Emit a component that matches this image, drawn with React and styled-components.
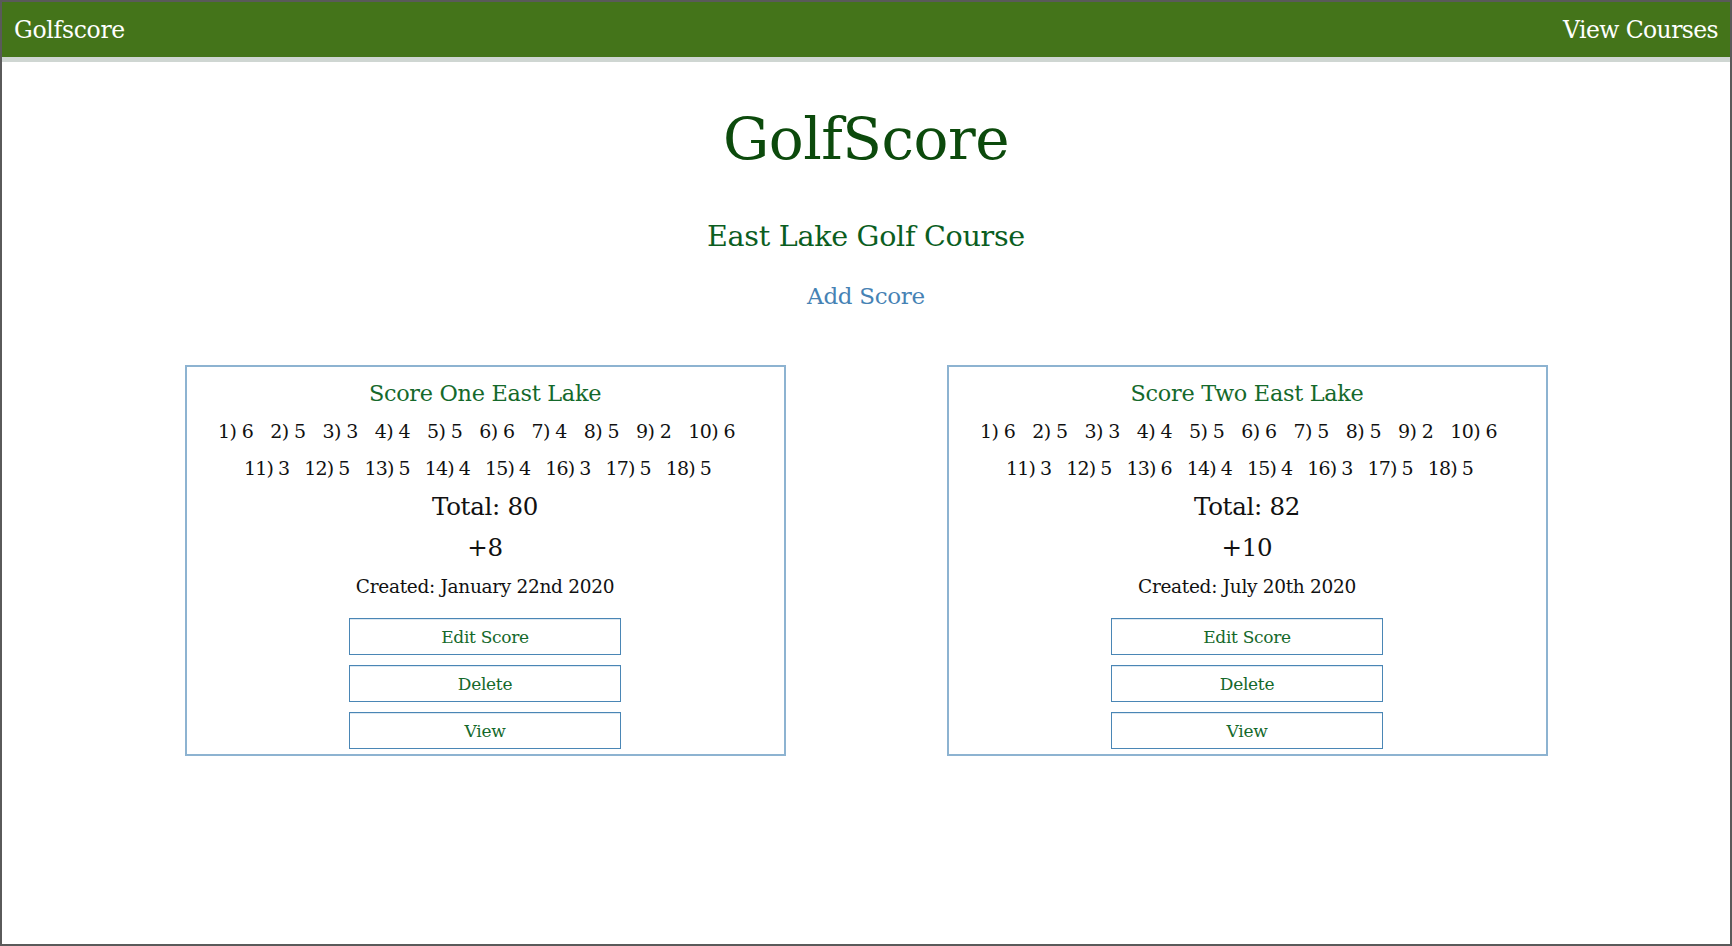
import React from "react";
import styled, { createGlobalStyle } from "styled-components";

const GlobalStyle = createGlobalStyle`
  html, body {
    margin: 0;
    padding: 0;
    background: #ffffff;
  }
  body {
    font-family: "DejaVu Serif", "Liberation Serif", serif;
  }
`;

const Frame = styled.div`
  box-sizing: border-box;
  min-height: 100vh;
  border: 2px solid #5a5a5a;
  background: #ffffff;
`;

const Nav = styled.nav`
  display: flex;
  justify-content: space-between;
  align-items: center;
  height: 55px;
  padding: 0 12px;
  background: #44741a;
  border-bottom: 5px solid #cfd6d2;
`;

const NavLink = styled.a`
  color: #ffffff;
  font-size: 23.5px;
  text-decoration: none;
  letter-spacing: ${(p) => (p.$tight ? "-0.6px" : "-0.3px")};
`;

const Main = styled.main`
  display: flex;
  flex-direction: column;
  align-items: center;
  text-align: center;
`;

const Title = styled.h1`
  margin: 42px 0 0;
  font-size: 58px;
  line-height: 70px;
  font-weight: normal;
  color: #0c4a0c;
  letter-spacing: -0.5px;
`;

const CourseName = styled.h2`
  margin: 44px 0 0;
  font-size: 28.6px;
  line-height: 36px;
  font-weight: normal;
  color: #0b5e1f;
  letter-spacing: -0.3px;
`;

const AddLink = styled.a`
  margin-top: 28px;
  font-size: 23px;
  line-height: 28px;
  color: #4682b4;
  text-decoration: none;
  letter-spacing: -0.3px;
`;

const Cards = styled.div`
  display: flex;
  justify-content: center;
  gap: 161px;
  margin-top: 55px;
`;

const Card = styled.section`
  box-sizing: border-box;
  width: 601px;
  height: 391px;
  border: 2px solid #8db3d1;
  padding: 11px 0 0;
  display: flex;
  flex-direction: column;
  align-items: center;
`;

const CardTitle = styled.h3`
  margin: 0;
  font-size: 22.4px;
  line-height: 30px;
  font-weight: normal;
  color: #15692b;
  letter-spacing: -0.3px;
`;

const HoleRow = styled.div`
  display: flex;
  justify-content: center;
  margin-top: ${(p) => p.$top}px;
  font-size: 19px;
  line-height: 24px;
  color: #111111;
  letter-spacing: ${(p) => p.$spacing}px;
`;

const Hole = styled.span`
  white-space: nowrap;
  margin-right: ${(p) => p.$gap}px;
`;

const Line = styled.div`
  margin-top: ${(p) => p.$top}px;
  font-size: ${(p) => p.$size}px;
  line-height: ${(p) => p.$lh}px;
  color: #111111;
  letter-spacing: -0.3px;
`;

const Buttons = styled.div`
  display: flex;
  flex-direction: column;
  gap: 10px;
  margin-top: 19px;
`;

const Button = styled.button`
  box-sizing: border-box;
  width: 272px;
  height: 37px;
  background: #ffffff;
  border: 1.5px solid #4a86b5;
  box-shadow: inset 0 1px 0 #dde8f1;
  font-family: inherit;
  font-size: 17px;
  color: #15692b;
  letter-spacing: -0.3px;
  cursor: pointer;
`;

const scores = [
  {
    name: "Score One East Lake",
    holes: [6, 5, 3, 4, 5, 6, 4, 5, 2, 6, 3, 5, 5, 4, 4, 3, 5, 5],
    total: 80,
    par: "+8",
    created: "January 22nd 2020",
  },
  {
    name: "Score Two East Lake",
    holes: [6, 5, 3, 4, 5, 6, 5, 5, 2, 6, 3, 5, 6, 4, 4, 3, 5, 5],
    total: 82,
    par: "+10",
    created: "July 20th 2020",
  },
];

const ScoreCard = ({ score }) => {
  const front = score.holes.slice(0, 10);
  const back = score.holes.slice(10);
  return (
    <Card>
      <CardTitle>{score.name}</CardTitle>
      <HoleRow $top={11} $spacing={-0.6}>
        {front.map((s, i) => (
          <Hole key={i} $gap={17}>
            {i + 1}) {s}
          </Hole>
        ))}
      </HoleRow>
      <HoleRow $top={13} $spacing={-0.9}>
        {back.map((s, i) => (
          <Hole key={i} $gap={15}>
            {i + 11}) {s}
          </Hole>
        ))}
      </HoleRow>
      <Line $top={12} $size={24.5} $lh={30}>Total: {score.total}</Line>
      <Line $top={11} $size={24.5} $lh={30}>{score.par}</Line>
      <Line $top={12} $size={18.5} $lh={24}>Created: {score.created}</Line>
      <Buttons>
        <Button>Edit Score</Button>
        <Button>Delete</Button>
        <Button>View</Button>
      </Buttons>
    </Card>
  );
};

export default function App() {
  return (
    <>
      <GlobalStyle />
      <Frame>
        <Nav>
          <NavLink href="#">Golfscore</NavLink>
          <NavLink href="#" $tight>View Courses</NavLink>
        </Nav>
        <Main>
          <Title>GolfScore</Title>
          <CourseName>East Lake Golf Course</CourseName>
          <AddLink href="#">Add Score</AddLink>
          <Cards>
            {scores.map((s) => (
              <ScoreCard key={s.name} score={s} />
            ))}
          </Cards>
        </Main>
      </Frame>
    </>
  );
}
